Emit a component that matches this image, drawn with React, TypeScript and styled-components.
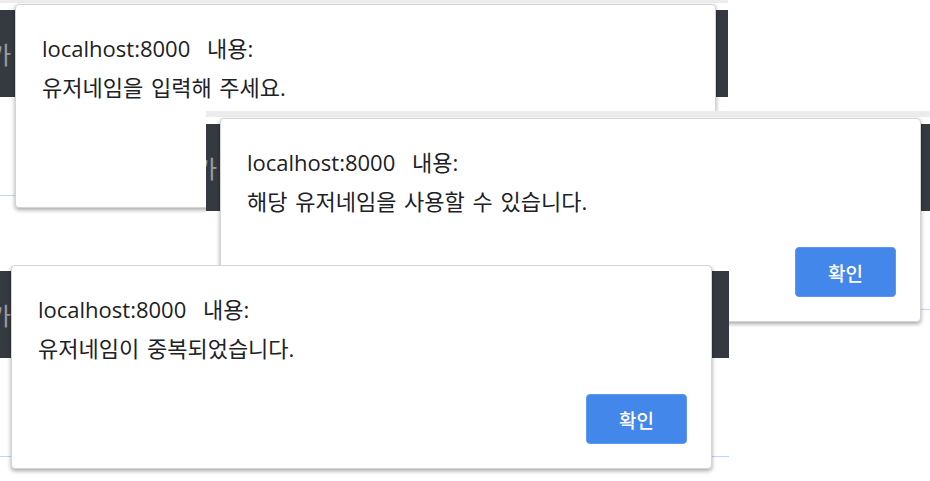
import React, {FC} from 'react';
import styled, {createGlobalStyle} from 'styled-components';

const GlobalStyle = createGlobalStyle`
    html, body {
        margin: 0;
        padding: 0;
        background: #ffffff;
    }
    body {
        font-family: "Open Sans", "Noto Sans CJK KR", sans-serif;
        color: #222222;
    }
`;

const Collage = styled.div`
    position: relative;
    width: 930px;
    height: 481px;
    overflow: hidden;
    background: #ffffff;
`;

// one cropped browser screenshot placed on the collage canvas
const Shot = styled.div<{$x: number; $y: number; $w: number; $h: number}>`
    position: absolute;
    left: ${p => p.$x}px;
    top: ${p => p.$y}px;
    width: ${p => p.$w}px;
    height: ${p => p.$h}px;
    overflow: hidden;
    background: #ffffff;
`;

const Page = styled.div<{$crop: number}>`
    position: relative;
    display: flex;
    flex-direction: column;
    margin-top: -${p => p.$crop}px;
`;

const TabStrip = styled.div`
    height: 6px;
    background: #ececec;
    margin-bottom: 7px;
`;

const Navbar = styled.div`
    height: 87px;
    background: #343a40;
    display: flex;
    align-items: center;
`;

const Brand = styled.span`
    margin-left: -11px;
    font-family: "Noto Sans CJK KR", sans-serif;
    font-size: 24px;
    color: rgba(255, 255, 255, 0.5);
`;

const InputLine = styled.div`
    height: 1px;
    margin-top: 98px;
    background: #c3d5f2;
`;

const Dialog = styled.div<{$x: number; $crop: number}>`
    position: absolute;
    left: ${p => p.$x}px;
    top: ${p => 7 - p.$crop}px;
    width: 701px;
    height: 204px;
    box-sizing: border-box;
    display: flex;
    flex-direction: column;
    padding: 0 24px 24px 26px;
    background: #ffffff;
    border: 1px solid #d4d4d4;
    border-radius: 4px;
    box-shadow: 0 2px 4px rgba(0, 0, 0, 0.35);
`;

const Title = styled.div`
    margin-top: 27px;
    font-size: 22px;
    line-height: 32px;
    word-spacing: 11px;
    color: #202124;
`;

const Message = styled.div`
    margin-top: 9px;
    font-size: 22px;
    line-height: 28px;
    word-spacing: 2px;
    color: #202124;
`;

const Footer = styled.div`
    margin-top: auto;
    display: flex;
    justify-content: flex-end;
`;

const OkButton = styled.button`
    width: 101px;
    height: 50px;
    border: 1px solid #5b98ee;
    border-radius: 4px;
    background: #4287e9;
    color: #ffffff;
    font-family: "Noto Sans CJK KR", sans-serif;
    font-size: 19px;
    font-weight: 500;
    padding: 0;
`;

type ShotData = {
    x: number;
    y: number;
    w: number;
    h: number;
    crop: number;
    dialogX: number;
    message: string;
};

const shots: ShotData[] = [
    {x: 0, y: 0, w: 728, h: 262, crop: 3, dialogX: 15, message: '유저네임을 입력해 주세요.'},
    {x: 206, y: 111, w: 724, h: 216, crop: 0, dialogX: 14, message: '해당 유저네임을 사용할 수 있습니다.'},
    {x: 0, y: 265, w: 729, h: 216, crop: 7, dialogX: 11, message: '유저네임이 중복되었습니다.'},
];

const AlertShot: FC<{shot: ShotData}> = ({shot}) => {
    return (
        <Shot $x={shot.x} $y={shot.y} $w={shot.w} $h={shot.h}>
            <Page $crop={shot.crop}>
                <TabStrip />
                <Navbar>
                    <Brand>가</Brand>
                </Navbar>
                <InputLine />
            </Page>
            <Dialog $x={shot.dialogX} $crop={shot.crop}>
                <Title>localhost:8000 내용:</Title>
                <Message>{shot.message}</Message>
                <Footer>
                    <OkButton>확인</OkButton>
                </Footer>
            </Dialog>
        </Shot>
    );
};

const App: FC = () => {
    return (
        <>
            <GlobalStyle />
            <Collage>
                {shots.map((s, i) => (
                    <AlertShot key={i} shot={s} />
                ))}
            </Collage>
        </>
    );
};

export default App;
